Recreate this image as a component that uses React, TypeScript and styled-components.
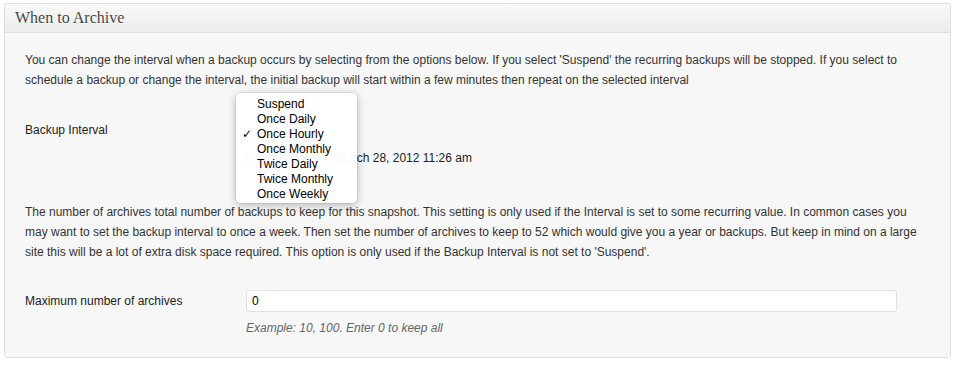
import React from "react";
import styled, { createGlobalStyle } from "styled-components";

const Global = createGlobalStyle`
  html, body { margin: 0; padding: 0; background: #ffffff; }
  body { font-family: "Liberation Sans", Arial, sans-serif; font-size: 12px; color: #333; }
`;

const Panel = styled.div`
  margin: 3px 0 0 4px;
  width: 947px;
  box-sizing: border-box;
  border: 1px solid #dfdfdf;
  border-radius: 3px;
  background: #f5f5f5;
  box-shadow: inset 0 1px 0 #fff;
`;

const Header = styled.div`
  height: 28px;
  display: flex;
  align-items: center;
  padding: 0 10px;
  border-bottom: 1px solid #dfdfdf;
  background: linear-gradient(to bottom, #f9f9f9, #ececec);
  border-radius: 3px 3px 0 0;
`;

const Title = styled.h3`
  margin: 0;
  font-family: "Liberation Serif", Georgia, serif;
  font-weight: normal;
  font-size: 16px;
  color: #464646;
  text-shadow: 0 1px 0 #fff;
`;

const Body = styled.div`
  padding: 17px 20px 19px;
  background: #f7f7f7;
`;

const Para = styled.p<{ $top?: number }>`
  margin: ${(p) => p.$top ?? 0}px 0 0;
  width: 904px;
  line-height: 20px;
  color: #333;
`;

const Row = styled.div<{ $top: number }>`
  display: grid;
  grid-template-columns: 221px 651px;
  align-items: center;
  margin-top: ${(p) => p.$top}px;
`;

const Label = styled.div`
  color: #222;
  line-height: 20px;
`;

const Field = styled.div`
  position: relative;
`;

const FakeSelect = styled.div`
  width: 106px;
  height: 22px;
  box-sizing: border-box;
  border: 1px solid #dfdfdf;
  border-radius: 3px;
  background: #fff;
`;

const Menu = styled.ul`
  position: absolute;
  left: -10px;
  top: -26px;
  width: 121px;
  box-sizing: border-box;
  margin: 0;
  padding: 4px 0 1px;
  list-style: none;
  background: rgba(255, 255, 255, 0.97);
  border-radius: 5px;
  box-shadow: 0 2px 9px rgba(0, 0, 0, 0.28), 0 0 0 1px rgba(0, 0, 0, 0.05);
  z-index: 2;
`;

const Item = styled.li`
  position: relative;
  height: 15px;
  line-height: 15px;
  padding-left: 21px;
  color: #000;
  font-size: 12px;
`;

const Check = styled.span`
  position: absolute;
  left: 6px;
  top: 0;
  font-size: 12px;
  font-family: "DejaVu Sans", sans-serif;
`;

const InfoText = styled.div`
  line-height: 20px;
  color: #222;
  white-space: nowrap;
`;

const Input = styled.input`
  width: 651px;
  height: 22px;
  box-sizing: border-box;
  border: 1px solid #dfdfdf;
  border-radius: 3px;
  background: #fff;
  padding: 0 5px;
  font-family: "Liberation Sans", Arial, sans-serif;
  font-size: 12px;
  color: #000;
  outline: none;
`;

const Hint = styled.div`
  margin: 6px 0 0 221px;
  line-height: 20px;
  font-style: italic;
  color: #666;
`;

const options = [
  "Suspend",
  "Once Daily",
  "Once Hourly",
  "Once Monthly",
  "Twice Daily",
  "Twice Monthly",
  "Once Weekly",
];

export default function App() {
  return (
    <>
      <Global />
      <Panel>
        <Header>
          <Title>When to Archive</Title>
        </Header>
        <Body>
          <Para>
            You can change the interval when a backup occurs by selecting from the options below. If you select
            'Suspend' the recurring backups will be stopped. If you select to schedule a backup or change the
            interval, the initial backup will start within a few minutes then repeat on the selected interval
          </Para>
          <Row $top={29}>
            <Label>Backup Interval</Label>
            <Field>
              <FakeSelect />
              <Menu>
                {options.map((o) => (
                  <Item key={o}>
                    {o === "Once Hourly" && <Check>✓</Check>}
                    {o}
                  </Item>
                ))}
              </Menu>
            </Field>
          </Row>
          <Row $top={7}>
            <Label />
            <InfoText>Next archive on: March 28, 2012 11:26 am</InfoText>
          </Row>
          <Para $top={34}>
            The number of archives total number of backups to keep for this snapshot. This setting is only used if
            the Interval is set to some recurring value. In common cases you may want to set the backup interval to
            once a week. Then set the number of archives to keep to 52 which would give you a year or backups. But
            keep in mind on a large site this will be a lot of extra disk space required. This option is only used
            if the Backup Interval is not set to 'Suspend'.
          </Para>
          <Row $top={28}>
            <Label>Maximum number of archives</Label>
            <Input defaultValue="0" />
          </Row>
          <Hint>Example: 10, 100. Enter 0 to keep all</Hint>
        </Body>
      </Panel>
    </>
  );
}
